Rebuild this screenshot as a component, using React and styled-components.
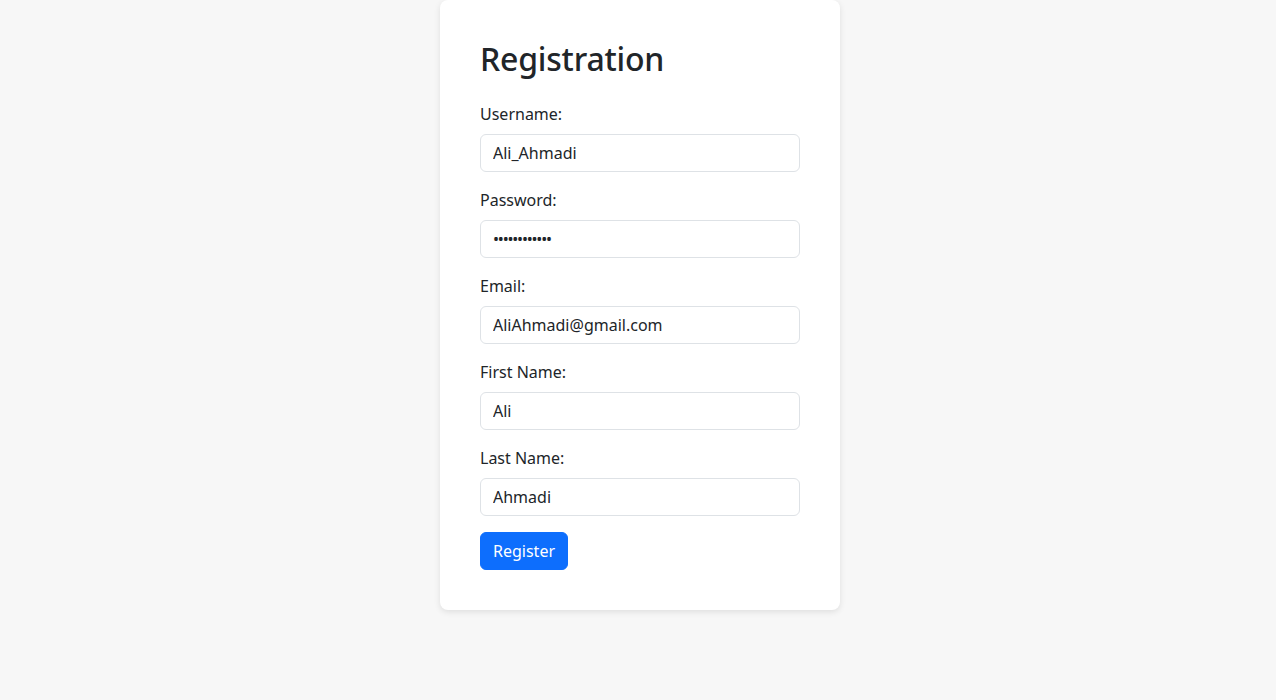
import styled, { createGlobalStyle } from "styled-components";

const GlobalStyle = createGlobalStyle`
    html, body {
        margin: 0;
        padding: 0;
        background: #f7f7f7;
        font-family: "Noto Sans", "Open Sans", sans-serif;
        color: #212529;
    }
    * { box-sizing: border-box; }
`;

const Page = styled.div`
    display: flex;
    justify-content: center;
    min-height: 700px;
    padding-left: 4px;
`;

const Card = styled.div`
    width: 400px;
    align-self: flex-start;
    background: #fff;
    border-radius: 8px;
    padding: 40px;
    box-shadow: 0 2px 6px rgba(0, 0, 0, 0.1);
`;

const Title = styled.h2`
    margin: 0 0 24px;
    font-size: 32px;
    font-weight: 500;
    line-height: 1.2;
    letter-spacing: -0.2px;
`;

const Field = styled.div`
    margin-bottom: 16px;
`;

const Label = styled.label`
    display: block;
    margin-bottom: 8px;
    font-size: 16px;
    line-height: 24px;
`;

const Input = styled.input`
    display: block;
    width: 100%;
    height: 38px;
    padding: 6px 12px;
    font-family: inherit;
    font-size: 16px;
    color: #212529;
    background: #fff;
    border: 1px solid #dee2e6;
    border-radius: 6px;
    outline: none;
    &[type="password"] {
        font-size: 16px;
        letter-spacing: -1.2px;
    }
`;

const Button = styled.button`
    height: 38px;
    padding: 6px 12px;
    font-family: inherit;
    font-size: 16px;
    line-height: 24px;
    color: #fff;
    background: #0d6efd;
    border: 1px solid #0d6efd;
    border-radius: 6px;
    cursor: pointer;
`;

const fields = [
    { id: "username", label: "Username:", type: "text", value: "Ali_Ahmadi" },
    { id: "password", label: "Password:", type: "password", value: "AliAhmadi123" },
    { id: "email", label: "Email:", type: "email", value: "AliAhmadi@gmail.com" },
    { id: "first", label: "First Name:", type: "text", value: "Ali" },
    { id: "last", label: "Last Name:", type: "text", value: "Ahmadi" },
];

const App = () => {
    return (
        <Page>
            <GlobalStyle />
            <Card>
                <Title>Registration</Title>
                <form onSubmit={e => e.preventDefault()}>
                    {fields.map(f => (
                        <Field key={f.id}>
                            <Label htmlFor={f.id}>{f.label}</Label>
                            <Input id={f.id} type={f.type} defaultValue={f.value} />
                        </Field>
                    ))}
                    <Button type="submit">Register</Button>
                </form>
            </Card>
        </Page>
    );
};
export default App;
